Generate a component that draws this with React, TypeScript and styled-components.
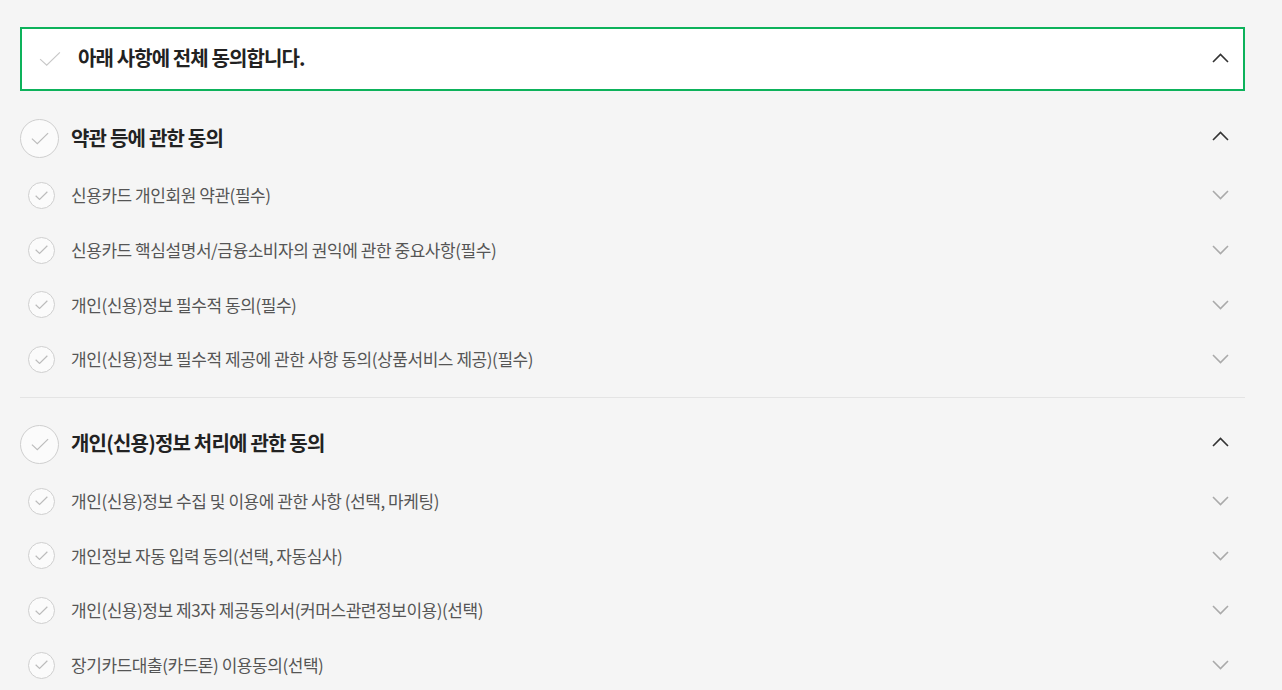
import React from 'react';
import styled, {createGlobalStyle} from 'styled-components';

const GlobalStyle = createGlobalStyle`
    html, body {
        margin: 0;
        padding: 0;
        background: #f5f5f5;
    }
    body {
        font-family: "Noto Sans CJK KR", "Noto Sans", sans-serif;
        color: #222;
    }
`;

const Page = styled.div`
    padding: 27px 37px 0 20px;
`;

const AllAgree = styled.div`
    display: flex;
    align-items: center;
    height: 64px;
    box-sizing: border-box;
    border: 2px solid #0db25b;
    background: #fff;
    padding: 0 14px 0 17px;
    margin-bottom: 1px;
`;

const AllTitle = styled.span`
    flex: 1;
    margin: 0 0 3px 17px;
    font-size: 20px;
    font-weight: 700;
    letter-spacing: -0.9px;
    color: #222;
`;

const Section = styled.section<{$divider?: boolean}>`
    padding: 27px 0 10px;
    border-bottom: ${(p) => (p.$divider ? '1px solid #e4e4e4' : 'none')};
`;

const SectionHead = styled.div`
    display: flex;
    align-items: center;
    height: 39px;
    padding-right: 16px;
    margin-bottom: 10px;
`;

const SectionTitle = styled.h3`
    flex: 1;
    margin: 0 0 3px 12px;
    font-size: 20px;
    font-weight: 700;
    letter-spacing: -0.8px;
    color: #222;
`;

const Item = styled.div`
    display: flex;
    align-items: center;
    height: 54.7px;
    padding: 0 16px 0 8px;
`;

const ItemText = styled.span`
    flex: 1;
    margin: 0 0 1px 16px;
    font-size: 17px;
    letter-spacing: -0.45px;
    color: #555;
`;

const Circle = styled.span<{$size: number}>`
    display: inline-flex;
    align-items: center;
    justify-content: center;
    flex: none;
    width: ${(p) => p.$size}px;
    height: ${(p) => p.$size}px;
    box-sizing: border-box;
    border: 1px solid #cfcfcf;
    border-radius: 50%;
    background: #fbfbfb;
`;

const Toggle = styled.span<{$lift: number}>`
    display: inline-flex;
    margin-bottom: ${(p) => p.$lift}px;
`;

const Check = ({w, color = '#bcbcbc'}: {w: number; color?: string}) => (
    <svg width={w} height={w * 0.72} viewBox="0 0 20 14.4" fill="none">
        <path d="M1 7.4 L7 13 L19 1.2" stroke={color} strokeWidth={20 / w * 1.2} />
    </svg>
);

const Chevron = ({up, color, lift = 0}: {up?: boolean; color: string; lift?: number}) => (
    <Toggle $lift={lift}>
        <svg width="17" height="10" viewBox="0 0 17 10" fill="none">
            <path
                d={up ? 'M1 9 L8.5 1.5 L16 9' : 'M1 1 L8.5 8.5 L16 1'}
                stroke={color}
                strokeWidth="1.6"
            />
        </svg>
    </Toggle>
);

const sections = [
    {
        title: '약관 등에 관한 동의',
        items: [
            '신용카드 개인회원 약관(필수)',
            '신용카드 핵심설명서/금융소비자의 권익에 관한 중요사항(필수)',
            '개인(신용)정보 필수적 동의(필수)',
            '개인(신용)정보 필수적 제공에 관한 사항 동의(상품서비스 제공)(필수)',
        ],
    },
    {
        title: '개인(신용)정보 처리에 관한 동의',
        items: [
            '개인(신용)정보 수집 및 이용에 관한 사항 (선택, 마케팅)',
            '개인정보 자동 입력 동의(선택, 자동심사)',
            '개인(신용)정보 제3자 제공동의서(커머스관련정보이용)(선택)',
            '장기카드대출(카드론) 이용동의(선택)',
        ],
    },
];

export default function App() {
    return (
        <Page>
            <GlobalStyle />
            <AllAgree>
                <Check w={22} color="#c8c8c8" />
                <AllTitle>아래 사항에 전체 동의합니다.</AllTitle>
                <Chevron up color="#333" lift={2} />
            </AllAgree>
            {sections.map((s, i) => (
                <Section key={s.title} $divider={i === 0}>
                    <SectionHead>
                        <Circle $size={39}>
                            <Check w={18} />
                        </Circle>
                        <SectionTitle>{s.title}</SectionTitle>
                        <Chevron up color="#333" lift={5} />
                    </SectionHead>
                    {s.items.map((t) => (
                        <Item key={t}>
                            <Circle $size={27}>
                                <Check w={13} />
                            </Circle>
                            <ItemText>{t}</ItemText>
                            <Chevron color="#aaa" />
                        </Item>
                    ))}
                </Section>
            ))}
        </Page>
    );
}
